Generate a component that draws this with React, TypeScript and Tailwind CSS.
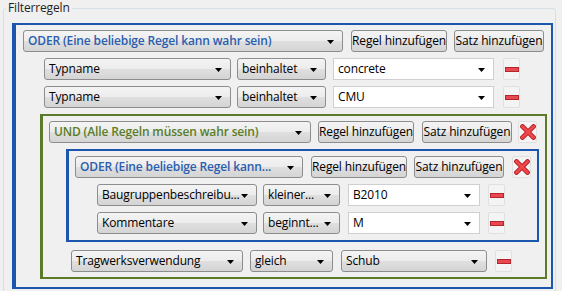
import React from "react";
import clsx from "clsx";

// win7 style controls
const grad =
    "rounded-[3px] border border-[#8d8d8d] bg-[linear-gradient(to_bottom,#f4f4f4_0%,#ececec_48%,#dfdfdf_52%,#d4d4d4_100%)]";

function Arrow() {
    return (
        <svg className="absolute right-[8px] top-[9px]" width="7" height="4" viewBox="0 0 7 4">
            <path d="M0 0h7L3.5 4z" fill="#000"/>
        </svg>
    );
}

function Combo({className, text, white, textClass}: { className: string; text: string; white?: boolean; textClass?: string }) {
    return (
        <div
            className={clsx(
                "relative flex h-[22px] shrink-0 items-center whitespace-nowrap pl-[4px] pr-[16px]",
                white ? "border border-[#cfcfcf] bg-white" : grad,
                className
            )}
        >
            <span className={clsx("block leading-[18px]", textClass)}>{text}</span>
            <Arrow/>
        </div>
    );
}

function Btn({className, label}: { className: string; label: string }) {
    return (
        <button className={clsx("flex h-[22px] shrink-0 items-center justify-center whitespace-nowrap leading-[18px]", grad, className)}>
            {label}
        </button>
    );
}

function Minus({className}: { className: string }) {
    return (
        <div className={clsx("flex h-[22px] w-[17px] shrink-0 items-center justify-center rounded-[2px] border border-[#e0e0e0] bg-[#f4f4f4]", className)}>
            <div className="h-[5px] w-[14px] border border-[#b3262c] bg-[#ea4850]"/>
        </div>
    );
}

function RemoveX({className}: { className: string }) {
    return (
        <div className={clsx("flex h-[22px] w-[19px] shrink-0 items-center justify-center rounded-[2px] border border-[#e0e0e0] bg-[#f4f4f4]", className)}>
            <svg width="16" height="16" viewBox="0 0 16 16">
                <path d="M2.5 2.5L13.5 13.5M13.5 2.5L2.5 13.5" stroke="#b8262a" strokeWidth="4.6" strokeLinecap="square"/>
                <path d="M2.5 2.5L13.5 13.5M13.5 2.5L2.5 13.5" stroke="#f0474d" strokeWidth="2.6" strokeLinecap="square"/>
            </svg>
        </div>
    );
}

const blueText = "font-semibold text-[#2b5eae]";
const greenText = "font-semibold text-[#5a7d27]";

export default function App() {
    return (
        <div className="h-[291px] w-[562px] overflow-hidden bg-[#f0f0f0] font-['Open_Sans',sans-serif] text-[12px] leading-none tracking-[-0.15px] text-black">
            <fieldset className="ml-[3px] w-[553px] rounded-[3px] border border-[#d5dfe5] pb-[10px]">
                <legend className="ml-[2px] px-[2px] leading-[16px] text-[#1e1e1e]">Filterregeln</legend>

                {/* ODER outer */}
                <div className="ml-[8px] mt-[7px] flex w-[541px] flex-col items-start gap-[6px] border-2 border-l-4 border-[#1c55ae] pb-[8px] pt-[5px]">
                    <div className="ml-[7px] flex items-center">
                        <Combo className="w-[320px]" text="ODER (Eine beliebige Regel kann wahr sein)" textClass={blueText}/>
                        <Btn className="ml-[8px] w-[96px]" label="Regel hinzufügen"/>
                        <Btn className="ml-[7px] w-[90px]" label="Satz hinzufügen"/>
                    </div>
                    <div className="ml-[28px] flex items-center">
                        <Combo className="w-[187px]" text="Typname"/>
                        <Combo className="ml-[6px] w-[89px]" text="beinhaltet"/>
                        <Combo className="ml-[7px] w-[161px]" text="concrete" white/>
                        <Minus className="ml-[9px]"/>
                    </div>
                    <div className="ml-[28px] flex items-center">
                        <Combo className="w-[187px]" text="Typname"/>
                        <Combo className="ml-[6px] w-[89px]" text="beinhaltet"/>
                        <Combo className="ml-[7px] w-[161px]" text="CMU" white/>
                        <Minus className="ml-[9px]"/>
                    </div>

                    {/* UND */}
                    <div className="ml-[24px] flex w-[507px] flex-col items-start gap-[6px] border-2 border-l-[3px] border-[#5b7b2a] pb-[5px] pt-[5px]">
                        <div className="ml-[6px] flex items-center">
                            <Combo className="w-[262px]" text="UND (Alle Regeln müssen wahr sein)" textClass={greenText}/>
                            <Btn className="ml-[7px] w-[96px]" label="Regel hinzufügen"/>
                            <Btn className="ml-[8px] w-[90px]" label="Satz hinzufügen"/>
                            <RemoveX className="ml-[6px]"/>
                        </div>

                        {/* ODER inner */}
                        <div className="ml-[23px] flex w-[473px] flex-col items-start gap-[6px] border-2 border-l-[3px] border-[#1c55ae] pb-[6px] pt-[5px]">
                            <div className="ml-[6px] flex items-center">
                                <Combo className="w-[228px]" text="ODER (Eine beliebige Regel kann..." textClass={blueText}/>
                                <Btn className="ml-[8px] w-[96px]" label="Regel hinzufügen"/>
                                <Btn className="ml-[7px] w-[90px]" label="Satz hinzufügen"/>
                                <RemoveX className="ml-[8px]"/>
                            </div>
                            <div className="ml-[28px] flex items-center">
                                <Combo className="w-[160px]" text="Baugruppenbeschreibu..."/>
                                <Combo className="ml-[6px] w-[77px]" text="kleiner..."/>
                                <Combo className="ml-[8px] w-[132px]" text="B2010" white/>
                                <Minus className="ml-[8px]"/>
                            </div>
                            <div className="ml-[28px] flex items-center">
                                <Combo className="w-[160px]" text="Kommentare"/>
                                <Combo className="ml-[6px] w-[77px]" text="beginnt..."/>
                                <Combo className="ml-[8px] w-[132px]" text="M" white/>
                                <Minus className="ml-[8px]"/>
                            </div>
                        </div>

                        <div className="ml-[28px] mt-[2px] flex items-center">
                            <Combo className="w-[172px]" text="Tragwerksverwendung"/>
                            <Combo className="ml-[7px] w-[83px]" text="gleich"/>
                            <Combo className="ml-[8px] w-[146px]" text="Schub"/>
                            <Minus className="ml-[8px]"/>
                        </div>
                    </div>
                </div>
            </fieldset>
        </div>
    );
}
